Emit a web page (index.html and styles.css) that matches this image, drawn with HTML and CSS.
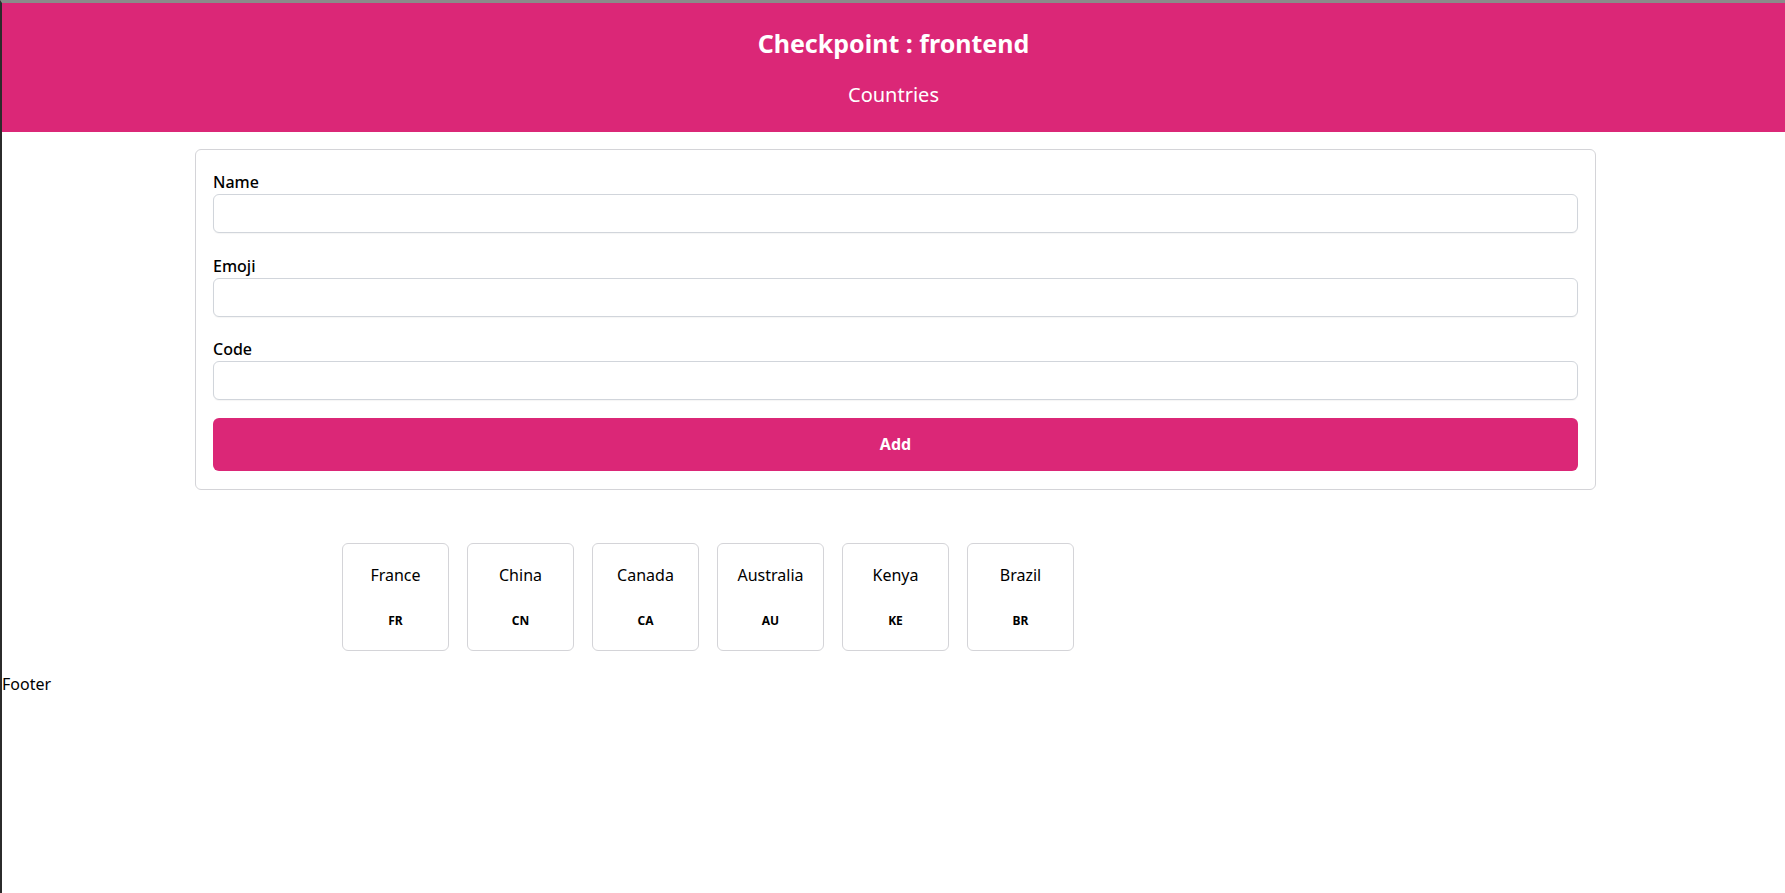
FILE: index.html
```html
<!DOCTYPE html>
<html lang="en">
<head>
<meta charset="utf-8">
<title>Checkpoint : frontend</title>
<link rel="stylesheet" href="styles.css">
</head>
<body>
<header class="site-header">
  <h1 class="site-title">Checkpoint : frontend</h1>
  <p class="site-subtitle">Countries</p>
</header>
<main class="main">
  <form class="form-card">
    <div class="field">
      <label class="field-label" for="name">Name</label>
      <input class="field-input" id="name" type="text">
    </div>
    <div class="field">
      <label class="field-label" for="emoji">Emoji</label>
      <input class="field-input" id="emoji" type="text">
    </div>
    <div class="field">
      <label class="field-label" for="code">Code</label>
      <input class="field-input" id="code" type="text">
    </div>
    <button class="add-button" type="button">Add</button>
  </form>
  <section class="country-list">
    <div class="country-card"><span class="country-name">France</span><span class="country-code">FR</span></div>
    <div class="country-card"><span class="country-name">China</span><span class="country-code">CN</span></div>
    <div class="country-card"><span class="country-name">Canada</span><span class="country-code">CA</span></div>
    <div class="country-card"><span class="country-name">Australia</span><span class="country-code">AU</span></div>
    <div class="country-card"><span class="country-name">Kenya</span><span class="country-code">KE</span></div>
    <div class="country-card"><span class="country-name">Brazil</span><span class="country-code">BR</span></div>
  </section>
</main>
<footer class="site-footer">Footer</footer>
</body>
</html>
```
FILE: styles.css
```css
* {
  box-sizing: border-box;
}

html, body {
  height: 100%;
}

body {
  margin: 0;
  border-top: 3px solid #8a8a8a;
  border-left: 2px solid #2b2b2b;
  font-family: "Noto Sans", "Open Sans", sans-serif;
  color: #000;
  background: #fff;
}

.site-header {
  background: #db2777;
  color: #fff;
  text-align: center;
  padding: 24px 0 23px;
  height: 129px;
}

.site-title {
  margin: 0;
  font-size: 25px;
  line-height: 33px;
  font-weight: 700;
}

.site-subtitle {
  margin: 20.5px 0 0;
  font-size: 20px;
  line-height: 28px;
  font-weight: 400;
}

.main {
  padding-left: 4px;
}

.form-card {
  width: 1401px;
  margin: 17px auto 0;
  border: 1px solid #d4d4d8;
  border-radius: 6px;
  padding: 20px 17px 18px;
  display: flex;
  flex-direction: column;
}

.field {
  display: flex;
  flex-direction: column;
  margin-bottom: 20.5px;
}

.field:nth-of-type(3) {
  margin-bottom: 17.5px;
}

.field-label {
  font-size: 16px;
  line-height: 24px;
  font-weight: 500;
}

.field-input {
  height: 39px;
  border: 1px solid #d1d5db;
  border-radius: 6px;
  padding: 0 10px;
  font: inherit;
  background: #fff;
  box-shadow: 0 1px 1px rgba(0, 0, 0, 0.04);
}

.add-button {
  height: 53px;
  border: none;
  border-radius: 6px;
  background: #db2777;
  color: #fff;
  font-family: inherit;
  font-size: 16px;
  font-weight: 700;
}

.country-list {
  display: flex;
  gap: 18px;
  padding-left: 336px;
  margin-top: 53px;
}

.country-card {
  width: 107px;
  height: 108px;
  border: 1px solid #d4d4d8;
  border-radius: 6px;
  display: flex;
  flex-direction: column;
  align-items: center;
  padding-top: 19px;
}

.country-name {
  font-size: 16px;
  line-height: 24px;
}

.country-code {
  margin-top: 26px;
  font-size: 12px;
  line-height: 16px;
  font-weight: 700;
}

.site-footer {
  margin-top: 21px;
  font-size: 16px;
  line-height: 24px;
}
```
